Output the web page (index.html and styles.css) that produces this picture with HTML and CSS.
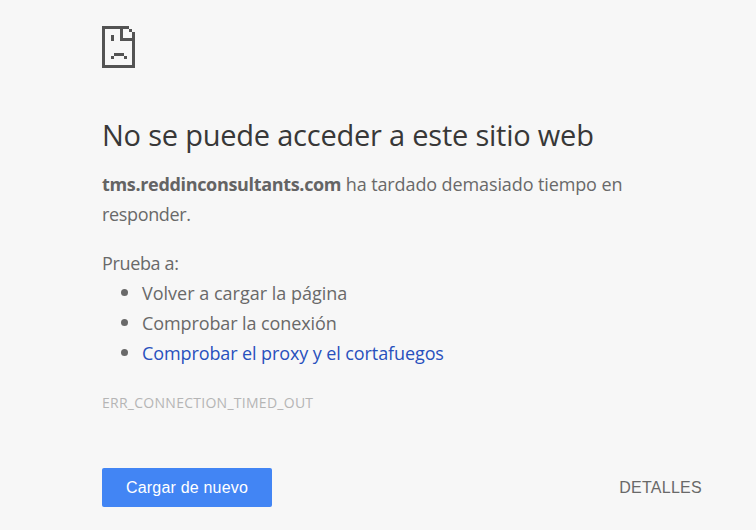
FILE: index.html
```html
<!DOCTYPE html>
<html lang="es">
<head>
<meta charset="utf-8">
<title>tms.reddinconsultants.com</title>
<link rel="stylesheet" href="styles.css">
</head>
<body>
<main class="page">
<svg class="icon" width="33" height="42" viewBox="0 0 33 42" shape-rendering="crispEdges" aria-hidden="true">
<path fill="#535353" d="M0 0H27V3H3V39H30V15H18V3H21V12H30V6H33V42H0ZM27 3H30V6H27ZM9 9H12V15H9ZM12 27H22V30H12ZM9 30H12V33H9ZM22 30H25V33H22Z"/>
</svg>
<h1>No se puede acceder a este sitio web</h1>
<p class="summary"><strong>tms.reddinconsultants.com</strong> ha tardado demasiado tiempo en<br><span class="tight">responder.</span></p>
<p class="try tight">Prueba a:</p>
<ul>
<li class="first">Volver a cargar la página</li>
<li>Comprobar la conexión</li>
<li><a href="#">Comprobar el proxy y el cortafuegos</a></li>
</ul>
<div class="code">ERR_CONNECTION_TIMED_OUT</div>
<div class="actions"><button class="reload">Cargar de nuevo</button><button class="details">DETALLES</button></div>
</main>
</body>
</html>
```

FILE: styles.css
```css
body { margin: 0; background: #f7f7f7; color: #696969; font: 400 18px/30px "Open Sans", "Noto Sans", sans-serif; }
.page { width: 600px; margin-left: 102px; padding-top: 26px; white-space: nowrap; }
.icon { display: block; }
h1 { margin: 49px 0 16px; font-size: 29px; line-height: 36px; font-weight: 400; letter-spacing: -0.22px; color: #383838; }
p { margin: 0; }
.summary { letter-spacing: -0.11px; }
.summary strong { font-weight: 700; letter-spacing: -0.33px; color: #646464; }
.summary .tight, .tight { letter-spacing: -0.35px; }
.try { margin-top: 19px; }
ul { margin: 0; padding-left: 40px; }
li { letter-spacing: -0.1px; }
li::marker { font-size: 20px; }
.first { letter-spacing: 0; }
a { color: #2850bd; text-decoration: none; }
.code { margin-top: 20px; font-size: 14px; letter-spacing: 0.27px; color: #b5b5b5; }
.actions { display: flex; justify-content: space-between; margin-top: 50px; }
button { height: 39px; border: 0; border-radius: 2px; padding: 0; font: 16px "Liberation Sans", sans-serif; letter-spacing: 0.2px; }
.reload { width: 170px; background: #4285f4; color: #fff; }
.details { background: none; color: #696969; letter-spacing: 0.28px; }
```
